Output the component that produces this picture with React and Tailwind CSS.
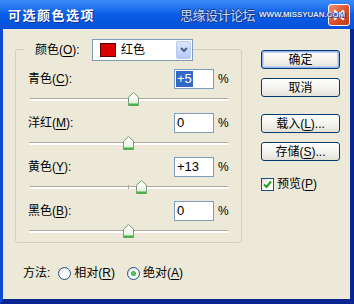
import React from 'react';

const ui = "font-['Liberation_Sans','Noto_Sans_CJK_SC',sans-serif]";

function Mn({ children }) {
  return <span className="underline underline-offset-[2px] decoration-1">{children}</span>;
}

function XpButton({ children, primary }) {
  return (
    <div
      className={
        'h-[19px] w-[79px] rounded-[3px] border border-[#003C74] flex items-center justify-center text-[12px] text-black bg-gradient-to-b from-white via-[#F5F4EF] to-[#E3E1D6] ' +
        (primary ? 'shadow-[inset_0_0_0_1px_#97B5EA,inset_0_0_0_2px_#BCD1F5]' : '')
      }
    >
      {children}
    </div>
  );
}

function Thumb() {
  return (
    <svg width="11" height="14" viewBox="0 0 11 14">
      <defs>
        <linearGradient id="thumbFill" x1="0" y1="0" x2="0" y2="1">
          <stop offset="0" stopColor="#FFFFFF" />
          <stop offset="0.7" stopColor="#EEF4EC" />
          <stop offset="1" stopColor="#C9E6C4" />
        </linearGradient>
      </defs>
      <path d="M0.5 5.2 L5.5 0.5 L10.5 5.2 L10.5 13.5 L0.5 13.5 Z" fill="url(#thumbFill)" stroke="#7A9C78" />
      <path d="M1 12.5 L10 12.5" stroke="#3FB63F" strokeWidth="2" />
    </svg>
  );
}

function Slider({ value, tick }) {
  // track runs 200px wide, centre at 99.5, 1% ≈ 1px
  const center = 99.5 + value;
  return (
    <div className="relative mt-[3px] ml-[13px] h-[14px] w-[200px]">
      <div className="absolute left-0 right-0 top-[6px] h-[3px] rounded-full border-t border-[#A9A89A] bg-white" />
      {tick && <div className="absolute top-[5px] h-[4px] w-px bg-[#A9A89A]" style={{ left: 99 }} />}
      <div className="absolute top-0" style={{ left: Math.round(center - 5.5) }}>
        <Thumb />
      </div>
    </div>
  );
}

function Row({ label, mn, value, selected, slider, tick, first }) {
  return (
    <div className={first ? 'mt-[8px]' : 'mt-[7px]'}>
      <div className="flex items-center h-[20px] pl-[12px]">
        <div className="w-[146px] text-[12px]">
          {label}(<Mn>{mn}</Mn>):
        </div>
        <div className="h-[20px] w-[40px] border border-[#7F9DB9] bg-white flex items-center pl-[1px] text-[13px]">
          {selected ? <span className="bg-[#316AC5] text-white px-[1px] leading-[16px]">{value}</span> : <span className="px-[1px]">{value}</span>}
        </div>
        <div className="ml-[4px] text-[12px]">%</div>
      </div>
      <Slider value={slider} tick={tick} />
    </div>
  );
}

function Radio({ checked }) {
  return (
    <div className="h-[13px] w-[13px] rounded-full border border-[#1C5180] bg-gradient-to-br from-[#DCDBD3] via-white to-white flex items-center justify-center">
      {checked && <div className="h-[5px] w-[5px] rounded-full bg-[radial-gradient(circle,#5FD35F,#21A121)]" />}
    </div>
  );
}

export default function App() {
  return (
    <div className={'w-[354px] h-[304px] flex flex-col overflow-hidden bg-[#0A2C9E] ' + ui}>
      {/* title bar */}
      <div className="relative h-[29px] shrink-0 flex items-center justify-between bg-gradient-to-b from-[#3C8CF6] via-[#0A5DE8] to-[#0650D8]">
        <div className="pl-[8px] text-[13px] font-bold text-white tracking-[1.5px] [text-shadow:1px_1px_0_#0A2F9A] font-['Noto_Sans_CJK_SC',sans-serif]">
          可选颜色选项
        </div>
        <div className="mr-[4px] h-[22px] w-[22px] rounded-[3px] border border-white bg-gradient-to-br from-[#F0906E] via-[#E0512D] to-[#C13A17] flex items-center justify-center">
          <svg width="12" height="12" viewBox="0 0 12 12">
            <path d="M2 2 L10 10 M10 2 L2 10" stroke="white" strokeWidth="2.2" strokeLinecap="square" />
          </svg>
        </div>
        <div className="absolute z-10 left-[180px] top-[6px] flex items-center gap-[4px] whitespace-nowrap">
          <span className="text-[13px] leading-[17px] tracking-[-0.5px] text-[#C2D8FA] font-['Noto_Sans_CJK_SC',sans-serif] [text-shadow:1px_1px_0_#1B3C93,-1px_0_0_#1B3C93,0_-1px_0_#1B3C93]">
            思缘设计论坛
          </span>
          <span className="text-[8px] font-bold text-[#D6E4FB] tracking-[-0.1px] [text-shadow:1px_1px_0_#1B3C93,-1px_0_0_#1B3C93] font-['Liberation_Sans',sans-serif]">
            WWW.MISSYUAN.COM
          </span>
        </div>
      </div>

      {/* body */}
      <div className="flex-1 flex border-l-[3px] border-l-[#0B4CD6] border-r-[4px] border-r-[#0A2591] border-b-[5px] border-b-[#0A2591] bg-[#ECE9D8] pl-[12px] pt-[10px] text-black">
        <div className="w-[227px] flex flex-col">
          {/* group box */}
          <div className="mt-[10px] rounded-[3px] border border-[#D0D0BF] pb-[4px]">
            <div className="-mt-[11px] flex items-center">
              <div className="ml-[8px] h-[22px] bg-[#ECE9D8] pl-[11px] pr-[2px] flex items-center text-[12px] w-[68px]">
                颜色(<Mn>O</Mn>):
              </div>
              <div className="h-[22px] w-[101px] border border-[#7F9DB9] bg-white flex items-center pl-[7px] pr-[1px]">
                <div className="h-[14px] w-[16px] border border-[#5A0000] bg-[#D90000]" />
                <div className="ml-[5px] flex-1 text-[12px]">红色</div>
                <div className="h-[18px] w-[15px] rounded-[2px] border border-[#B9CBF3] bg-gradient-to-b from-[#DCE6FD] to-[#B6CBF8] flex items-center justify-center">
                  <svg width="8" height="6" viewBox="0 0 8 6">
                    <path d="M1 1 L4 4 L7 1" fill="none" stroke="#4D6185" strokeWidth="2" />
                  </svg>
                </div>
              </div>
            </div>
            <Row first label="青色" mn="C" value="+5" selected slider={5} />
            <Row label="洋红" mn="M" value="0" slider={0} />
            <Row label="黄色" mn="Y" value="+13" slider={13} tick />
            <Row label="黑色" mn="B" value="0" slider={0} />
          </div>

          {/* method */}
          <div className="mt-[22px] h-[16px] flex items-center pl-[8px] text-[12px]">
            <span>方法:</span>
            <div className="ml-[8px]">
              <Radio />
            </div>
            <span className="ml-[3px]">
              相对(<Mn>R</Mn>)
            </span>
            <div className="ml-[12px]">
              <Radio checked />
            </div>
            <span className="ml-[3px]">
              绝对(<Mn>A</Mn>)
            </span>
          </div>
        </div>

        {/* buttons */}
        <div className="ml-[19px] pt-[11px] flex flex-col">
          <XpButton primary>确定</XpButton>
          <div className="mt-[9px]">
            <XpButton>取消</XpButton>
          </div>
          <div className="mt-[17px]">
            <XpButton>
              载入(<Mn>L</Mn>)...
            </XpButton>
          </div>
          <div className="mt-[9px]">
            <XpButton>
              存储(<Mn>S</Mn>)...
            </XpButton>
          </div>
          <div className="mt-[14px] flex items-center text-[12px]">
            <div className="h-[13px] w-[13px] border border-[#1C5180] bg-gradient-to-br from-[#DCDBD3] via-white to-white flex items-center justify-center">
              <svg width="9" height="9" viewBox="0 0 9 9">
                <path d="M1 4.5 L3.5 7 L8 1.5" fill="none" stroke="#21A121" strokeWidth="2" />
              </svg>
            </div>
            <span className="ml-[3px]">
              预览(<Mn>P</Mn>)
            </span>
          </div>
        </div>
      </div>
    </div>
  );
}
